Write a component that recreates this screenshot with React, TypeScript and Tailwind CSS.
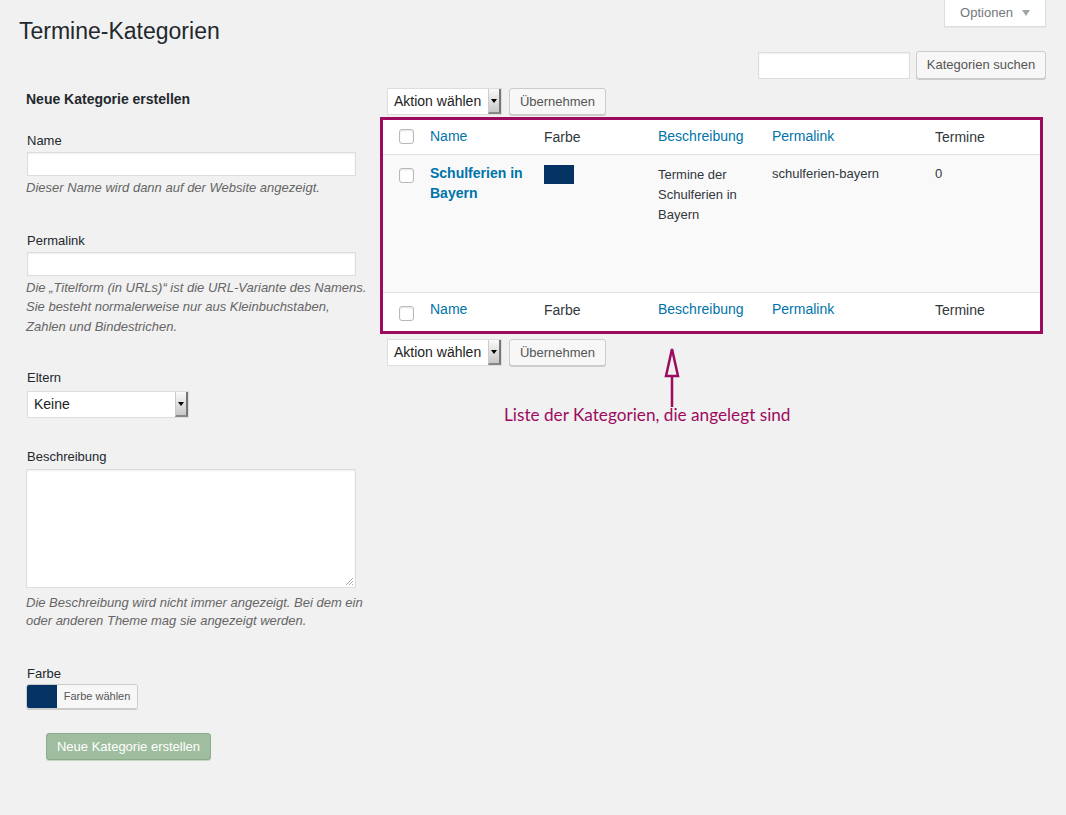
const linkCls = 'text-[#0073aa]'

function Checkbox() {
  return <div className="w-[15px] h-[15px] rounded-[3px] border border-[#b4b9be] bg-white shadow-[inset_0_1px_2px_rgba(0,0,0,0.1)]" />
}

function FakeSelect({ label, width }: { label: string; width: string }) {
  return (
    <div className={`flex h-[27px] bg-white border border-[#ddd] ${width}`}>
      <div className="flex-1 px-[6px] flex items-center text-[14px] text-[#222]">{label}</div>
      <div className="w-[13px] flex items-center justify-center bg-gradient-to-b from-[#fafafa] to-[#c8c8c8] border-l border-[#ccc] border-r-2 border-r-[#777] border-b-2 border-b-[#888]">
        <div className="w-0 h-0 border-l-[3px] border-r-[3px] border-t-[4px] border-l-transparent border-r-transparent border-t-black" />
      </div>
    </div>
  )
}

function Button({ children, className = '' }: { children: React.ReactNode; className?: string }) {
  return (
    <div className={`flex items-center justify-center whitespace-nowrap bg-[#f7f7f7] border border-[#ccc] rounded-[3px] shadow-[0_1px_0_#ccc] text-[13px] text-[#555] ${className}`}>
      {children}
    </div>
  )
}

function BulkRow() {
  return (
    <div className="flex gap-[7px] items-center">
      <FakeSelect label="Aktion wählen" width="w-[115px]" />
      <Button className="h-[27px] w-[97px]">Übernehmen</Button>
    </div>
  )
}

function HeadRow({ top }: { top?: boolean }) {
  return (
    <div className={`flex items-center bg-white text-[14px] ${top ? 'h-[35px] pb-[1px] border-b border-[#e1e1e1]' : 'h-[39px] pb-[5px] border-t border-[#e1e1e1]'}`}>
      <div className={`w-[37px] flex justify-center pl-[9px] ${top ? '' : 'pt-[7px]'}`}><Checkbox /></div>
      <div className={`w-[114px] pl-[10px] ${linkCls}`}>Name</div>
      <div className="w-[114px] pl-[10px] text-[#32373c] pt-[1px]">Farbe</div>
      <div className={`w-[114px] pl-[10px] ${linkCls}`}>Beschreibung</div>
      <div className={`w-[163px] pl-[10px] ${linkCls}`}>Permalink</div>
      <div className="flex-1 pl-[10px] text-[#32373c] pt-[1px]">Termine</div>
    </div>
  )
}

export default function App() {
  return (
    <div className="min-h-screen bg-[#f1f1f1] pl-[19px] pr-[20px] font-['Liberation_Sans',Arial,sans-serif] text-[#23282d]">
      <div className="flex justify-between items-start">
        <h1 className="mt-[17px] text-[23px] leading-[29px] text-[#23282d]">Termine-Kategorien</h1>
        <div className="h-[27px] w-[102px] bg-white border border-t-0 border-[#ddd] shadow-[0_1px_1px_rgba(0,0,0,0.04)] flex items-center justify-center gap-[9px] text-[13px] text-[#72777c]">
          <span>Optionen</span>
          <span className="w-0 h-0 border-l-[4px] border-r-[4px] border-t-[6px] border-l-transparent border-r-transparent border-t-[#a0a5aa]" />
        </div>
      </div>

      <div className="flex justify-end items-center gap-[5px] mt-[5px]">
        <div className="w-[152px] h-[27px] mr-[1px] bg-white border border-[#ddd] shadow-[inset_0_1px_2px_rgba(0,0,0,0.07)]" />
        <Button className="h-[28px] w-[130px]">Kategorien suchen</Button>
      </div>

      <div className="flex mt-[8px]">
        {/* left column: new category form */}
        <div className="w-[361px] pl-[7px] shrink-0">
          <h2 className="mt-[2px] text-[14px] font-bold leading-[20px] text-[#23282d]">Neue Kategorie erstellen</h2>

          <div className="mt-[23px] text-[13px] leading-[18px] pl-[1px]">Name</div>
          <div className="mt-[2px] ml-[1px] w-[329px] h-[24px] bg-white border border-[#ddd] shadow-[inset_0_1px_2px_rgba(0,0,0,0.07)]" />
          <p className="mt-[2px] text-[13px] leading-[19.5px] italic text-[#666]">Dieser Name wird dann auf der Website angezeigt.</p>

          <div className="mt-[34px] text-[13px] leading-[18px] pl-[1px]">Permalink</div>
          <div className="mt-[2px] ml-[1px] w-[329px] h-[24px] bg-white border border-[#ddd] shadow-[inset_0_1px_2px_rgba(0,0,0,0.07)]" />
          <p className="mt-[2px] text-[13px] leading-[19.5px] italic text-[#666] w-[345px]">
            Die „Titelform (in URLs)“ ist die URL-Variante des Namens. Sie besteht normalerweise nur aus Kleinbuchstaben, Zahlen und Bindestrichen.
          </p>

          <div className="mt-[33px] text-[13px] leading-[18px] pl-[1px]">Eltern</div>
          <div className="mt-[4px] ml-[1px]">
            <FakeSelect label="Keine" width="w-[162px]" />
          </div>

          <div className="mt-[30px] text-[13px] leading-[18px] pl-[1px]">Beschreibung</div>
          <div className="mt-[3px] relative w-[330px] h-[119px] bg-white border border-[#ddd] shadow-[inset_0_1px_2px_rgba(0,0,0,0.07)]">
            <svg className="absolute right-[1px] bottom-[1px]" width="9" height="9" viewBox="0 0 9 9">
              <path d="M8 1L1 8M8 4L4 8M8 7L7 8" stroke="#999" strokeWidth="0.8" />
            </svg>
          </div>
          <p className="mt-[6px] text-[13px] leading-[18px] italic text-[#666] w-[345px]">
            Die Beschreibung wird nicht immer angezeigt. Bei dem ein oder anderen Theme mag sie angezeigt werden.
          </p>

          <div className="mt-[35px] text-[13px] leading-[18px] pl-[1px]">Farbe</div>
          <div className="mt-[1px] flex w-[112px] h-[25px] border border-[#ccc] rounded-[3px] overflow-hidden shadow-[0_1px_0_#ccc]">
            <div className="w-[30px] bg-[#043363]" />
            <div className="flex-1 bg-[#f7f7f7] flex items-center justify-center text-[11px] text-[#555]">Farbe wählen</div>
          </div>

          <div className="mt-[24px] ml-[20px] w-[165px] h-[27px] rounded-[3px] bg-[#9fbe9f] border border-[#8bab8b] shadow-[0_1px_0_#c4d6c4] flex items-center justify-center text-[13px] text-white">
            Neue Kategorie erstellen
          </div>
        </div>

        {/* right column: category list */}
        <div className="flex-1">
          <div className="pl-[7px] pt-[1px]">
            <BulkRow />
          </div>
          <div className="mt-[2px] border-[3px] border-[#9c0b5e] mr-[3px]">
            <HeadRow top />
            <div className="flex h-[137px] bg-[#f9f9f9] items-start text-[13px]">
              <div className="w-[37px] flex justify-center pl-[9px] pt-[13px]"><Checkbox /></div>
              <div className={`w-[114px] pl-[10px] pt-[8px] text-[14px] leading-[20px] font-bold ${linkCls}`}>Schulferien in Bayern</div>
              <div className="w-[114px] pl-[10px] pt-[10px]">
                <div className="w-[30px] h-[19px] bg-[#043363]" />
              </div>
              <div className="w-[114px] pl-[10px] pr-[8px] pt-[10px] leading-[20px] text-[#32373c]">Termine der Schulferien in Bayern</div>
              <div className="w-[163px] pl-[10px] pt-[9px] leading-[20px] text-[#32373c]">schulferien-bayern</div>
              <div className="flex-1 pl-[10px] pt-[9px] leading-[20px] text-[#32373c]">0</div>
            </div>
            <HeadRow />
          </div>
          <div className="pl-[7px] mt-[5px]">
            <BulkRow />
          </div>
          <div className="relative h-[70px]">
            <svg className="absolute left-[282px] top-[-19px]" width="20" height="62" viewBox="0 0 20 62">
              <path d="M10 2L4 29H16Z" fill="none" stroke="#9c0b5e" strokeWidth="2.5" strokeLinejoin="miter" />
              <path d="M10 29V60" stroke="#9c0b5e" strokeWidth="2.5" />
            </svg>
            <div className="absolute left-[124px] top-[38px] text-[17.2px] leading-[22px] text-[#9c0b5e] font-['Lato',sans-serif] whitespace-nowrap">
              Liste der Kategorien, die angelegt sind
            </div>
          </div>
        </div>
      </div>
    </div>
  )
}
